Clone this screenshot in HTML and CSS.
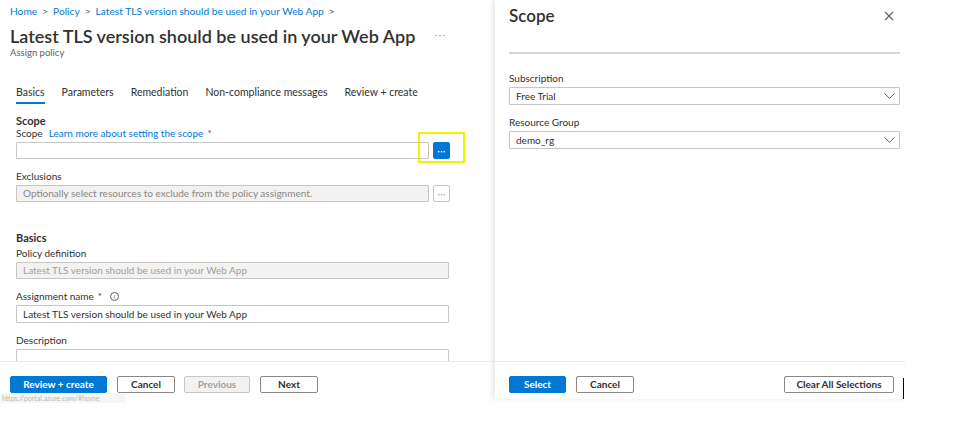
FILE: index.html
```html
<!DOCTYPE html>
<html>
<head>
<meta charset="utf-8">
<link rel="stylesheet" href="styles.css">
</head>
<body>
<div class="page">
  <div class="blade">
    <div class="blade-body">
      <nav class="crumbs">
        <a>Home</a><span class="sep">&gt;</span><a>Policy</a><span class="sep">&gt;</span><a>Latest TLS version should be used in your Web App</a><span class="sep">&gt;</span>
      </nav>
      <div class="title-row">
        <h1 class="title">Latest TLS version should be used in your Web App</h1>
        <svg class="more" width="10" height="3" viewBox="0 0 10 3"><circle cx="1" cy="1.5" r="0.7" fill="#8a8886"/><circle cx="5" cy="1.5" r="0.7" fill="#8a8886"/><circle cx="9" cy="1.5" r="0.7" fill="#8a8886"/></svg>
      </div>
      <div class="subtitle">Assign policy</div>
      <div class="tabs">
        <span class="tab active">Basics</span>
        <span class="tab">Parameters</span>
        <span class="tab">Remediation</span>
        <span class="tab">Non-compliance messages</span>
        <span class="tab">Review + create</span>
      </div>
      <div class="form">
        <div class="section-head">Scope</div>
        <div class="label">Scope <a class="link">Learn more about setting the scope</a> <span class="req">*</span></div>
        <div class="picker-row">
          <div class="input"></div>
          <button class="pick primary"><svg width="7" height="2" viewBox="0 0 7 2"><rect x="0" y="0" width="1.4" height="1.4" fill="#fff"/><rect x="2.8" y="0" width="1.4" height="1.4" fill="#fff"/><rect x="5.6" y="0" width="1.4" height="1.4" fill="#fff"/></svg></button>
          <div class="highlight"></div>
        </div>
        <div class="label gap">Exclusions</div>
        <div class="picker-row">
          <div class="input disabled ph">Optionally select resources to exclude from the policy assignment.</div>
          <button class="pick"><svg width="7" height="2" viewBox="0 0 7 2"><rect x="0" y="0" width="1.4" height="1.4" fill="#b3b0ad"/><rect x="2.8" y="0" width="1.4" height="1.4" fill="#b3b0ad"/><rect x="5.6" y="0" width="1.4" height="1.4" fill="#b3b0ad"/></svg></button>
        </div>
        <div class="section-head big-gap">Basics</div>
        <div class="label small-gap">Policy definition</div>
        <div class="input wide disabled">Latest TLS version should be used in your Web App</div>
        <div class="label gap">Assignment name <span class="req">*</span> <span class="info">i</span></div>
        <div class="input wide filled">Latest TLS version should be used in your Web App</div>
        <div class="label gap">Description</div>
        <div class="input wide textarea"></div>
      </div>
    </div>
    <div class="footer">
      <button class="btn primary w-review">Review + create</button>
      <button class="btn w-cancel">Cancel</button>
      <button class="btn disabled-btn w-prev">Previous</button>
      <button class="btn w-next">Next</button>
    </div>
    <div class="status">https://portal.azure.com/#home</div>
  </div>
  <div class="flyout">
    <div class="fly-body">
      <div class="fly-head">
        <h2 class="fly-title">Scope</h2>
        <span class="close">
          <svg width="10" height="10" viewBox="0 0 10 10"><path d="M1 1L9 9M9 1L1 9" stroke="#605e5c" stroke-width="1.1" fill="none"/></svg>
        </span>
      </div>
      <div class="divider"></div>
      <div class="label fly-label">Subscription</div>
      <div class="dropdown"><span>Free Trial</span><svg width="11" height="6" viewBox="0 0 11 6"><path d="M0.5 0.5L5.5 5.3L10.5 0.5" stroke="#605e5c" stroke-width="1" fill="none"/></svg></div>
      <div class="label gap">Resource Group</div>
      <div class="dropdown"><span>demo_rg</span><svg width="11" height="6" viewBox="0 0 11 6"><path d="M0.5 0.5L5.5 5.3L10.5 0.5" stroke="#605e5c" stroke-width="1" fill="none"/></svg></div>
    </div>
    <div class="footer fly-footer">
      <button class="btn primary w-select">Select</button>
      <button class="btn w-cancel">Cancel</button>
      <span class="spacer"></span>
      <button class="btn w-clear">Clear All Selections</button>
    </div>
  </div>
  <div class="cursor"></div>
</div>
</body>
</html>
```

FILE: styles.css
```css
* { box-sizing: border-box; }
html, body { margin: 0; padding: 0; background: #fff; }
body {
  font-family: "Segoe UI", Lato, "Open Sans", sans-serif;
  color: #323130;
  width: 972px;
  height: 424px;
  overflow: hidden;
}
.page {
  position: relative;
  display: flex;
  width: 972px;
  height: 424px;
  align-items: flex-start;
}
.blade {
  position: relative;
  width: 495px;
  height: 399px;
  display: flex;
  flex-direction: column;
  flex: none;
}
.blade-body {
  flex: 1;
  overflow: hidden;
  padding: 4px 0 0 10px;
}
.crumbs {
  font-size: 10.2px;
  line-height: 14px;
  color: #0078d4;
  white-space: nowrap;
}
.crumbs .sep {
  color: #605e5c;
  margin: 0 5px;
}
.title-row {
  display: flex;
  align-items: center;
  margin-top: 8px;
  height: 20px;
}
.title {
  margin: 0;
  font-size: 18px;
  font-weight: 600;
  line-height: 20px;
  white-space: nowrap;
}
.more {
  margin-left: 20px;
  margin-top: -2px;
}
.subtitle {
  font-size: 9.5px;
  line-height: 12px;
  color: #605e5c;
  margin-top: 1px;
}
.tabs {
  display: flex;
  gap: 17px;
  margin-top: 26px;
  padding-left: 6px;
  font-size: 10.5px;
  line-height: 14px;
}
.tab {
  padding-bottom: 3px;
  border-bottom: 2px solid transparent;
  color: #323130;
  white-space: nowrap;
}
.tab.active {
  border-bottom-color: #0078d4;
}
.form {
  padding-left: 6px;
  width: 449px;
  margin-top: 10px;
}
.section-head {
  font-size: 11px;
  font-weight: 700;
  line-height: 13px;
}
.section-head.big-gap { margin-top: 29px; }
.label {
  font-size: 10px;
  line-height: 13px;
  color: #323130;
  margin-bottom: 2px;
  white-space: nowrap;
  display: flex;
  align-items: center;
  gap: 4px;
}
.label.gap { margin-top: 11px; }
.label.small-gap { margin-top: 3px; }
.link { color: #0078d4; margin-left: 2px; }
.req { color: #a4262c; }
.info {
  display: inline-flex;
  align-items: center;
  justify-content: center;
  width: 9px;
  height: 9px;
  border: 1px solid #605e5c;
  border-radius: 50%;
  font-size: 6px;
  line-height: 1;
  color: #605e5c;
  margin-left: 4px;
}
.picker-row {
  position: relative;
  display: flex;
  gap: 4px;
  align-items: center;
}
.input {
  height: 17px;
  border: 1px solid #c8c6c4;
  border-radius: 1px;
  background: #fff;
  font-size: 10px;
  line-height: 15px;
  padding: 0 6px;
  white-space: nowrap;
  overflow: hidden;
}
.picker-row .input { width: 413px; }
.input.wide { width: 433px; }
.input.disabled {
  background: #f3f2f1;
  color: #a19f9d;
}
.input.ph { color: #8a8886; }
.input.filled { height: 18px; line-height: 16px; }
.input.textarea { height: 40px; }
.pick {
  width: 17px;
  height: 17px;
  border: 1px solid #c8c6c4;
  border-radius: 2px;
  background: #fff;
  padding: 0;
  display: flex;
  align-items: center;
  justify-content: center;
}
.pick svg { margin-top: 3px; }
.pick.primary {
  background: #0078d4;
  border-color: #0078d4;
}
.highlight {
  position: absolute;
  left: 402px;
  top: -10px;
  width: 47px;
  height: 31px;
  border: 2px solid #f2f200;
  pointer-events: none;
}
.footer {
  height: 38px;
  border-top: 1px solid #edebe9;
  display: flex;
  align-items: flex-start;
  gap: 10px;
  padding: 14px 0 0 10px;
  flex: none;
}
.btn {
  height: 17px;
  border: 1px solid #8a8886;
  border-radius: 2px;
  background: #fff;
  font-family: inherit;
  font-size: 10px;
  font-weight: 700;
  color: #323130;
  padding: 0;
  line-height: 15px;
}
.btn.primary {
  background: #0078d4;
  border-color: #0078d4;
  color: #fff;
}
.btn.disabled-btn {
  background: #f3f2f1;
  border-color: #c8c6c4;
  color: #a19f9d;
}
.w-review { width: 97px; }
.w-cancel { width: 58px; }
.w-prev { width: 66px; margin-left: -1px; }
.w-next { width: 58px; }
.w-select { width: 57px; }
.w-clear { width: 110px; }
.status {
  position: absolute;
  left: 0;
  top: 393px;
  width: 125px;
  height: 10px;
  background: #f6f6f6;
  color: #b8b8b8;
  font-size: 7px;
  line-height: 10px;
  padding-left: 2px;
  overflow: hidden;
  white-space: nowrap;
}
.flyout {
  width: 410px;
  height: 399px;
  flex: none;
  background: #fff;
  box-shadow: -3px 0 5px rgba(0,0,0,0.09);
  display: flex;
  flex-direction: column;
}
.fly-body {
  flex: 1;
  padding: 0 5px 0 14px;
}
.fly-head {
  display: flex;
  align-items: center;
  justify-content: space-between;
  height: 32px;
  padding-right: 6px;
}
.fly-title {
  margin: 0;
  font-size: 17px;
  font-weight: 600;
  line-height: 22px;
}
.close { display: flex; }
.divider {
  height: 2px;
  background: #d8d6d4;
  margin-top: 20px;
  width: 391px;
}
.fly-label { margin-top: 18px; }
.dropdown {
  width: 391px;
  height: 18px;
  border: 1px solid #c8c6c4;
  border-radius: 1px;
  display: flex;
  align-items: center;
  justify-content: space-between;
  padding: 0 4px 0 6px;
  font-size: 10px;
}
.fly-footer {
  padding-left: 14px;
  gap: 10px;
  padding-right: 11px;
}
.spacer { flex: 1; }
.cursor {
  position: absolute;
  left: 903px;
  top: 378px;
  width: 1px;
  height: 21px;
  background: #000;
}
```
